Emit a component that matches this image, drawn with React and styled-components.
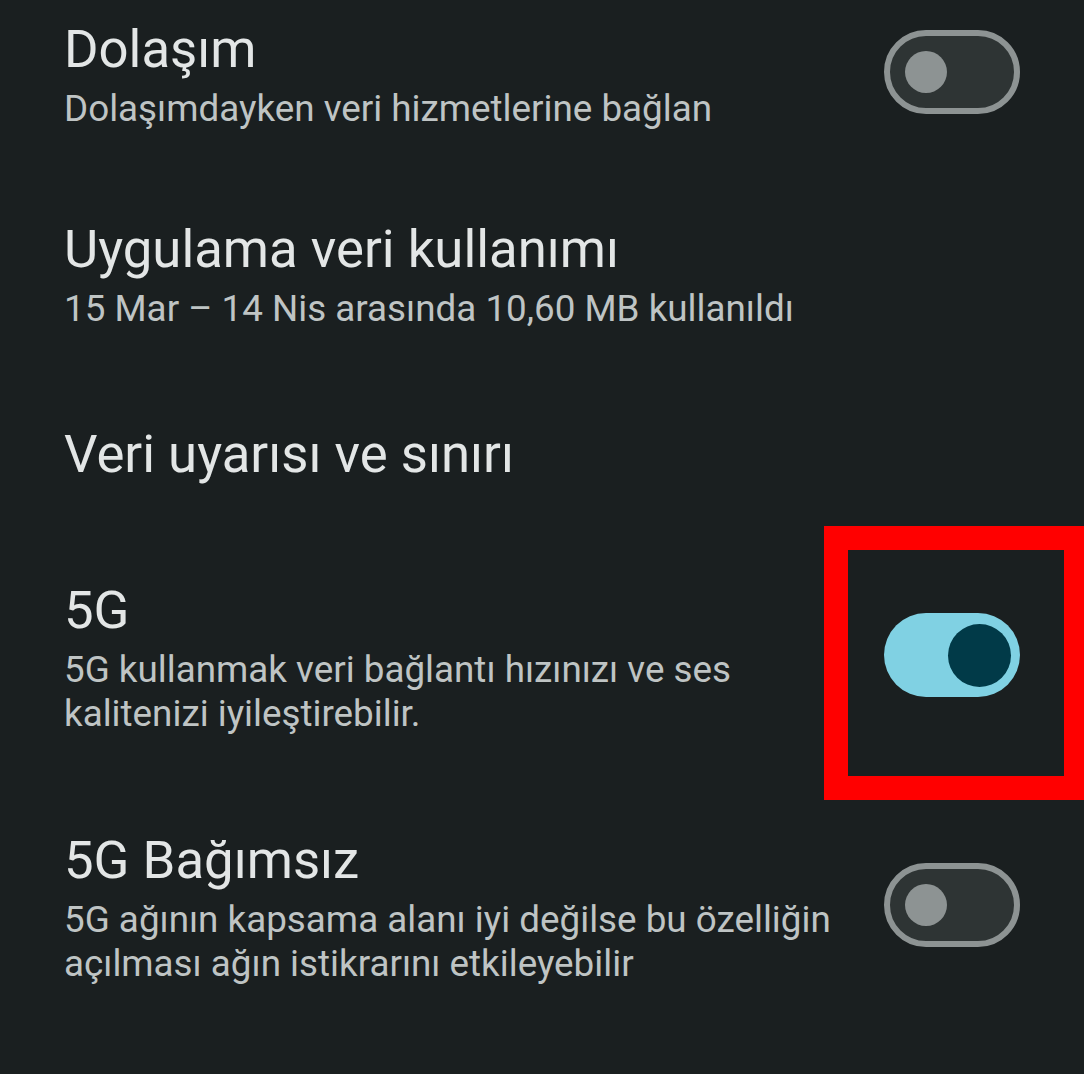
import React from "react";
import styled, { createGlobalStyle } from "styled-components";

const Global = createGlobalStyle`
  html, body { margin: 0; padding: 0; background: #1a1f20; }
  body { font-family: Roboto, "Noto Sans", "Liberation Sans", sans-serif; overflow: hidden; }
`;

const Page = styled.div`
  position: relative;
  width: 1084px;
  height: 1074px;
  background: #1a1f20;
  overflow: hidden;
`;

const List = styled.div`
  display: flex;
  flex-direction: column;
`;

const Row = styled.div`
  display: flex;
  align-items: center;
  justify-content: space-between;
  padding: ${(p) => p.$top}px 64px ${(p) => p.$bottom}px 64px;
`;

const TextBlock = styled.div`
  display: flex;
  flex-direction: column;
  gap: 8px;
  max-width: 800px;
`;

const Title = styled.div`
  font-size: 52.7px;
  line-height: 60px;
  color: #e3e6e6;
  font-weight: 400;
  white-space: nowrap;
`;

const Subtitle = styled.div`
  font-size: 36.8px;
  line-height: 44px;
  color: #bfc4c4;
  font-weight: 400;
  white-space: nowrap;
`;

const Track = styled.div`
  flex: none;
  box-sizing: border-box;
  width: 136px;
  height: 84px;
  margin-top: -6px;
  border-radius: 42px;
  display: flex;
  align-items: center;
  background: ${(p) => (p.$on ? "#80d1e3" : "#2e3434")};
  border: ${(p) => (p.$on ? "none" : "6px solid #8d9393")};
  justify-content: ${(p) => (p.$on ? "flex-end" : "flex-start")};
  padding: ${(p) => (p.$on ? "0 9px" : "0 0 0 15px")};
`;

const Thumb = styled.div`
  width: ${(p) => (p.$on ? 63 : 42)}px;
  height: ${(p) => (p.$on ? 63 : 42)}px;
  border-radius: 50%;
  background: ${(p) => (p.$on ? "#013a48" : "#8d9393")};
`;

const Highlight = styled.div`
  position: absolute;
  left: 824px;
  top: 526px;
  width: 260px;
  height: 274px;
  box-sizing: border-box;
  border: 24px solid #ff0000;
  border-right-width: 20px;
  pointer-events: none;
`;

const Toggle = ({ on }) => (
  <Track $on={on}>
    <Thumb $on={on} />
  </Track>
);

const rows = [
  {
    title: "Dolaşım",
    sub: ["Dolaşımdayken veri hizmetlerine bağlan"],
    toggle: false,
    top: 19,
    bottom: 44,
  },
  {
    title: "Uygulama veri kullanımı",
    sub: ["15 Mar – 14 Nis arasında 10,60 MB kullanıldı"],
    top: 44,
    bottom: 46,
  },
  {
    title: "Veri uyarısı ve sınırı",
    sub: [],
    top: 47,
    bottom: 48,
  },
  {
    title: "5G",
    sub: ["5G kullanmak veri bağlantı hızınızı ve ses", "kalitenizi iyileştirebilir."],
    toggle: true,
    top: 48,
    bottom: 47,
  },
  {
    title: "5G Bağımsız",
    sub: ["5G ağının kapsama alanı iyi değilse bu özelliğin", "açılması ağın istikrarını etkileyebilir"],
    toggle: false,
    top: 47,
    bottom: 50,
  },
];

export default function App() {
  return (
    <Page>
      <Global />
      <List>
        {rows.map((r) => (
          <Row key={r.title} $top={r.top} $bottom={r.bottom}>
            <TextBlock>
              <Title>{r.title}</Title>
              {r.sub.length > 0 && (
                <div>
                  {r.sub.map((s) => (
                    <Subtitle key={s}>{s}</Subtitle>
                  ))}
                </div>
              )}
            </TextBlock>
            {r.toggle !== undefined && <Toggle on={r.toggle} />}
          </Row>
        ))}
      </List>
      <Highlight />
    </Page>
  );
}
